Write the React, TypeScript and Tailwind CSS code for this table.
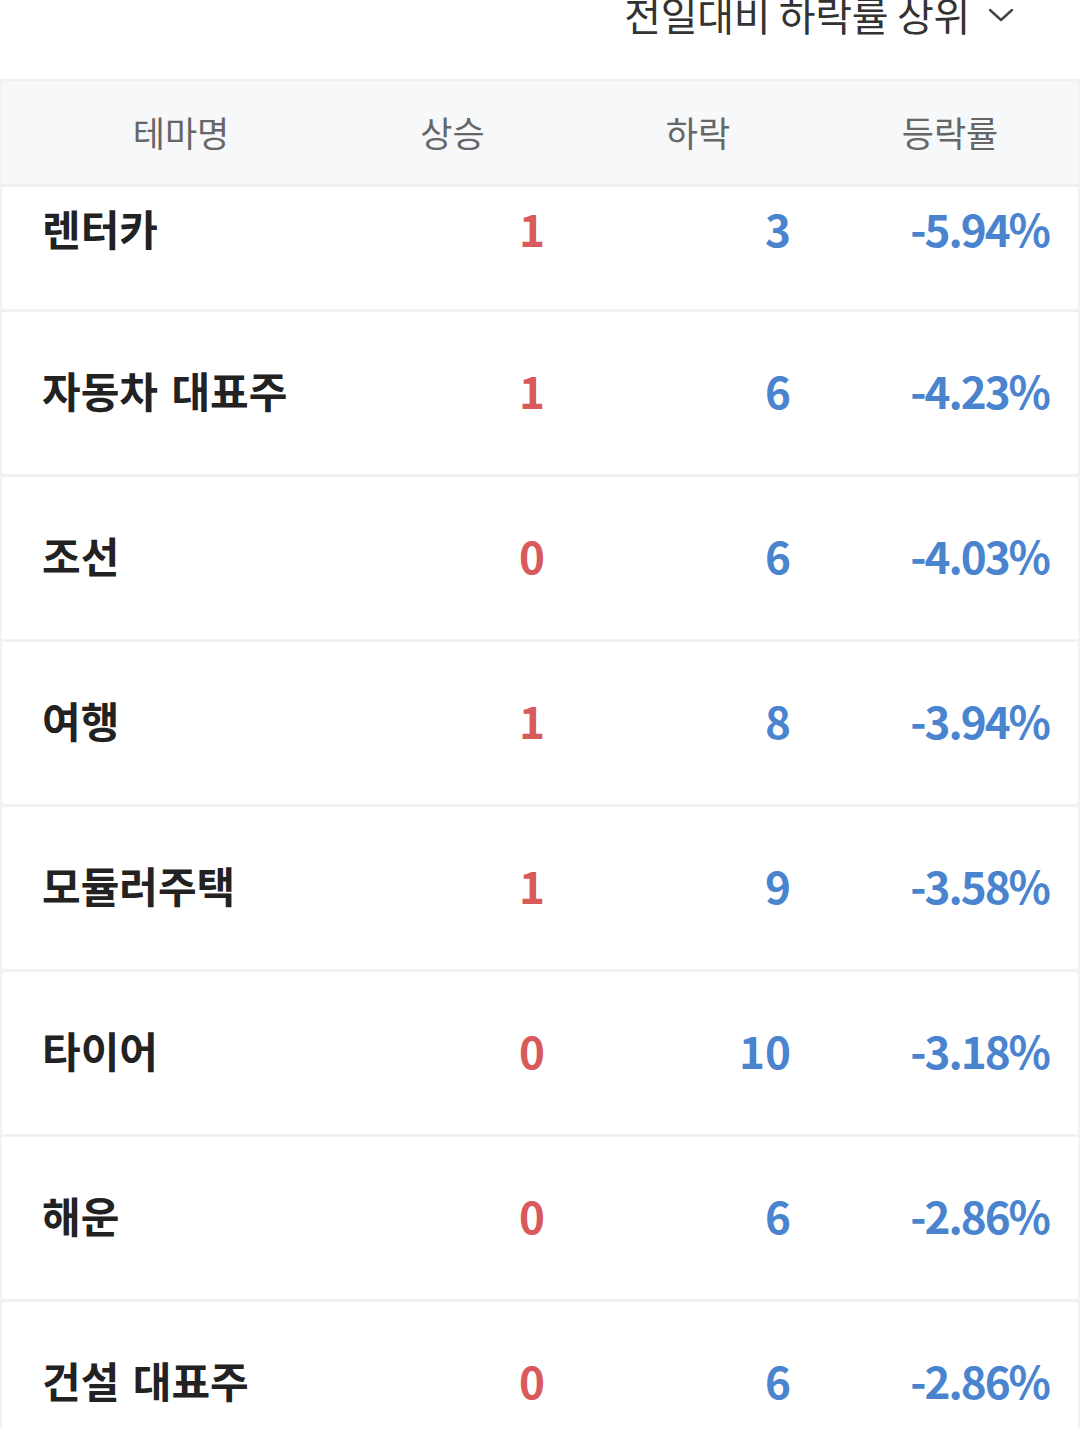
import React from "react";

const rows = [
  { name: "렌터카", up: "1", down: "3", rate: "-5.94%" },
  { name: "자동차 대표주", up: "1", down: "6", rate: "-4.23%" },
  { name: "조선", up: "0", down: "6", rate: "-4.03%" },
  { name: "여행", up: "1", down: "8", rate: "-3.94%" },
  { name: "모듈러주택", up: "1", down: "9", rate: "-3.58%" },
  { name: "타이어", up: "0", down: "10", rate: "-3.18%" },
  { name: "해운", up: "0", down: "6", rate: "-2.86%" },
  { name: "건설 대표주", up: "0", down: "6", rate: "-2.86%" },
];

const font = { fontFamily: '"Noto Sans CJK KR", "Noto Sans", sans-serif' };

export default function App() {
  return (
    <div className="w-[1080px] h-[1429px] overflow-hidden bg-white" style={font}>
      <div className="h-[79px] flex items-start justify-end pr-[66px]">
        <div className="flex items-center gap-[18px] -mt-[14px]">
          <span className="text-[40px] leading-[56px] text-[#333333] tracking-[-0.3px]">전일대비 하락률 상위</span>
          <svg width="26" height="16" viewBox="0 0 26 16" className="mt-[2px]">
            <path d="M2 3 L13 13 L24 3" fill="none" stroke="#444" strokeWidth="2.4" strokeLinecap="round" strokeLinejoin="round" />
          </svg>
        </div>
      </div>
      <div className="border-l-2 border-r-2 border-[#f1f2f4]">
        <div className="h-[108px] flex items-center bg-[#f7f8fa] border-t-2 border-b-[3px] border-[#eef0f2] text-[35px] text-[#666666]">
          <div className="w-[358px] text-center">테마명</div>
          <div className="w-[185px] text-center">상승</div>
          <div className="w-[306px] text-center">하락</div>
          <div className="w-[198px] text-center">등락률</div>
        </div>
        {rows.map((r, i) => (
          <div
            key={i}
            className={
              i === 0
                ? "h-[125px] flex items-start pt-[15px] border-b-[3px] border-[#f1f2f4]"
                : "h-[165px] flex items-center pb-[6px] border-b-[3px] border-[#f1f2f4]"
            }
          >
            <div className="w-[358px] pl-[40px] text-[42px] leading-[52px] font-bold text-[#222222] whitespace-pre" style={{ wordSpacing: "4px" }}>{r.name}</div>
            <div className="w-[185px] text-right text-[44px] leading-[52px] font-bold text-[#d95a5a]">{r.up}</div>
            <div className="w-[246px] text-right text-[44px] leading-[52px] font-bold text-[#4a84cf]">{r.down}</div>
            <div className="w-[258px] text-right text-[44px] leading-[52px] font-bold text-[#4a84cf] tracking-[-2px]">{r.rate}</div>
          </div>
        ))}
      </div>
    </div>
  );
}
